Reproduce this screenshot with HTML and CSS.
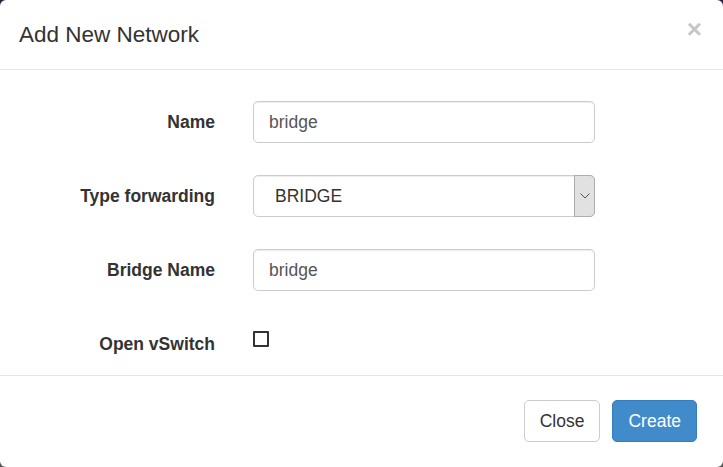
FILE: index.html
```html
<!DOCTYPE html>
<html>
<head>
<meta charset="utf-8">
<link rel="stylesheet" href="styles.css">
</head>
<body>
<div class="modal">
  <div class="modal-header">
    <h4 class="modal-title">Add New Network</h4>
    <button class="close" type="button">&times;</button>
  </div>
  <div class="modal-body">
    <form class="form">
      <label class="label" for="name">Name</label>
      <input class="input" id="name" type="text" value="bridge">

      <label class="label" for="type">Type forwarding</label>
      <div class="select-wrap">
        <select class="select" id="type"><option>BRIDGE</option></select>
        <span class="select-arrow"><svg width="10" height="6" viewBox="0 0 10 6"><path d="M0.5 0.5 L5 5 L9.5 0.5" fill="none" stroke="#555" stroke-width="1"/></svg></span>
      </div>

      <label class="label" for="bname">Bridge Name</label>
      <input class="input" id="bname" type="text" value="bridge">

      <label class="label label-check" for="ovs">Open vSwitch</label>
      <div class="check-cell"><input class="checkbox" id="ovs" type="checkbox"></div>
    </form>
  </div>
  <div class="modal-footer">
    <button class="btn btn-default" type="button">Close</button>
    <button class="btn btn-primary" type="button">Create</button>
  </div>
</div>
</body>
</html>
```

FILE: styles.css
```css
html, body {
  margin: 0;
  padding: 0;
  width: 723px;
  height: 467px;
  overflow: hidden;
  background: linear-gradient(#2d1f3f, #2d1f3f 50%, #555 50%, #555);
}
.modal {
  width: 723px;
  height: 467px;
  background: #fff;
  border-radius: 6px;
  font-family: "Liberation Sans", Arial, sans-serif;
  color: #333;
  font-size: 17.5px;
  display: flex;
  flex-direction: column;
  box-sizing: border-box;
}
.modal-header {
  display: flex;
  justify-content: space-between;
  align-items: flex-start;
  padding: 19px 19px 18px 19px;
  border-bottom: 1px solid #e5e5e5;
}
.modal-title {
  margin: 0;
  font-size: 22.5px;
  font-weight: normal;
  line-height: 32px;
  color: #333;
}
.close {
  background: none;
  border: 0;
  padding: 0;
  margin-top: 0;
  margin-right: 2px;
  font-family: "Liberation Sans", Arial, sans-serif;
  font-size: 26px;
  font-weight: bold;
  line-height: 20px;
  color: #000;
  opacity: 0.22;
  text-shadow: 0 1px 0 #fff;
}
.modal-body {
  padding: 31px 0 18px 0;
  flex: 1;
}
.form {
  display: grid;
  grid-template-columns: 215px 342px;
  column-gap: 38px;
  row-gap: 32px;
  align-items: center;
}
.label {
  text-align: right;
  font-weight: bold;
  color: #333;
  line-height: 25px;
}
.label-check {
  align-self: start;
  padding-top: 9px;
}
.input, .select {
  box-sizing: border-box;
  width: 342px;
  height: 42px;
  border: 1px solid #ccc;
  border-radius: 5px;
  font-family: "Liberation Sans", Arial, sans-serif;
  font-size: 17.5px;
  color: #555;
  background: #fff;
  box-shadow: inset 0 1px 1px rgba(0,0,0,0.075);
  outline: none;
}
.input {
  padding: 0 15px;
}
.select-wrap {
  position: relative;
  width: 342px;
  height: 42px;
}
.select {
  -webkit-appearance: none;
  appearance: none;
  padding: 0 0 0 21px;
  color: #333;
}
.select-arrow {
  position: absolute;
  right: 0;
  top: 0;
  width: 21px;
  height: 42px;
  box-sizing: border-box;
  background: #e1e1e1;
  border: 1px solid #adadad;
  border-radius: 0 5px 5px 0;
  display: flex;
  align-items: center;
  justify-content: center;
}
.check-cell {
  align-self: start;
  padding-top: 8px;
  height: 26px;
}
.checkbox {
  -webkit-appearance: none;
  appearance: none;
  margin: 0;
  width: 16px;
  height: 16px;
  border: 2px solid #333;
  border-radius: 1px;
  background: #fff;
  display: block;
}
.modal-footer {
  display: flex;
  justify-content: flex-end;
  gap: 12px;
  padding: 24px 26px 26px 19px;
  border-top: 1px solid #e5e5e5;
}
.btn {
  font-family: "Liberation Sans", Arial, sans-serif;
  font-size: 17.5px;
  line-height: 25px;
  padding: 7.5px 15px;
  border-radius: 5px;
  border: 1px solid transparent;
  cursor: pointer;
}
.btn-default {
  background: #fff;
  border-color: #ccc;
  color: #333;
}
.btn-primary {
  background: #428bca;
  border-color: #357ebd;
  color: #fff;
}
```
